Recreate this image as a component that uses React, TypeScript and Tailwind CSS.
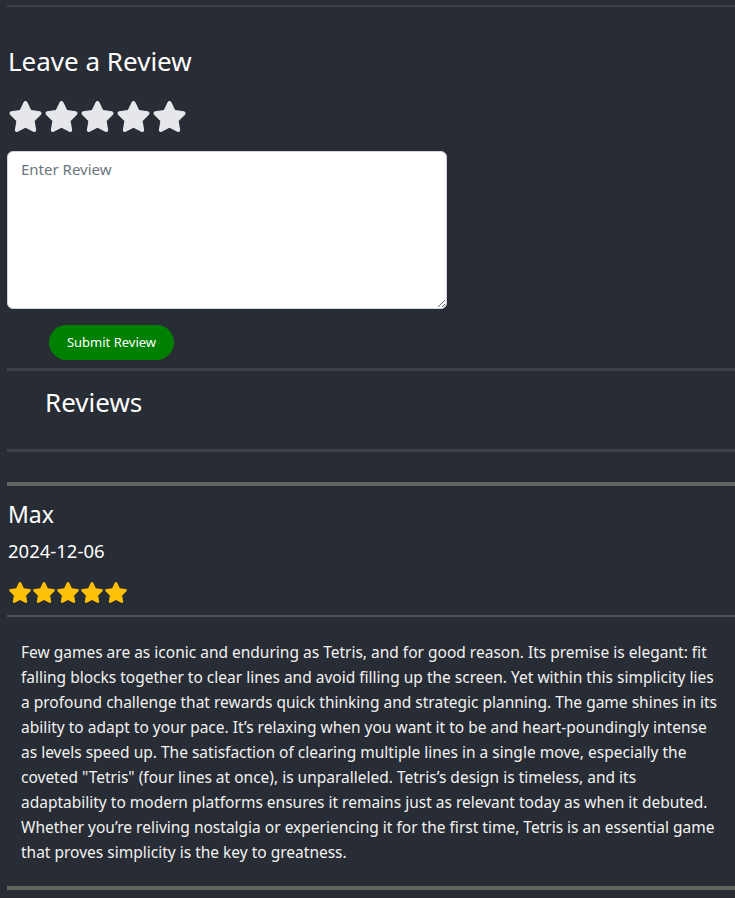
import React from "react";

const StarPath =
  "M316.9 18C311.6 7 300.4 0 288.1 0s-23.4 7-28.8 18L195 150.3 51.4 171.5c-12 1.8-22 10.2-25.7 21.7s-.7 24.2 7.9 32.7L137.8 329 113.2 474.7c-2 12 3 24.2 12.9 31.3s23 8 33.8 2.3l128.3-68.5 128.3 68.5c10.8 5.7 23.9 4.9 33.8-2.3s14.9-19.3 12.9-31.3L438.5 329 542.7 225.9c8.6-8.5 11.700-21.2 7.9-32.7s-13.7-19.9-25.7-21.7L381.2 150.3 316.9 18z";

function Star({ w, h, color }: { w: number; h: number; color: string }) {
  return (
    <svg width={w} height={h} viewBox="0 0 576 512" fill={color} className="block shrink-0">
      <path d={StarPath} />
    </svg>
  );
}

const lines = [
  "Few games are as iconic and enduring as Tetris, and for good reason. Its premise is elegant: fit",
  "falling blocks together to clear lines and avoid filling up the screen. Yet within this simplicity lies",
  "a profound challenge that rewards quick thinking and strategic planning. The game shines in its",
  "ability to adapt to your pace. It\u2019s relaxing when you want it to be and heart-poundingly intense",
  "as levels speed up. The satisfaction of clearing multiple lines in a single move, especially the",
  "coveted \"Tetris\" (four lines at once), is unparalleled. Tetris\u2019s design is timeless, and its",
  "adaptability to modern platforms ensures it remains just as relevant today as when it debuted.",
  "Whether you\u2019re reliving nostalgia or experiencing it for the first time, Tetris is an essential game",
  "that proves simplicity is the key to greatness.",
];

export default function App() {
  return (
    <div
      className="min-h-screen bg-[#282c34] pl-[7px] pt-[5px] text-white"
      style={{ fontFamily: '"Segoe UI", "Noto Sans", sans-serif' }}
    >
      <div className="h-[2px] bg-[#3d414a]" />
      <h2 className="mt-[34px] pl-px text-[26px] leading-[40px] font-normal">Leave a Review</h2>
      <div className="mt-[19px] flex gap-px pl-px">
        {[0, 1, 2, 3, 4].map((i) => (
          <Star key={i} w={35} h={33} color="#e5e7eb" />
        ))}
      </div>
      <textarea
        placeholder="Enter Review"
        className="mt-[18px] block h-[158px] w-[440px] rounded-[6px] border border-[#ced4da] bg-white px-[13px] py-[6px] text-[15px] text-black placeholder:text-[#6c757d]"
      />
      <button className="ml-[42px] mt-[16px] block h-[35px] w-[125px] rounded-full bg-[#008000] text-[13px] text-white">
        Submit Review
      </button>
      <div className="mt-[8px] h-[3px] bg-[#3d414a]" />
      <h2 className="mt-[11px] pl-[38px] text-[26px] leading-[40px] font-normal">Reviews</h2>
      <div className="mt-[27px] h-[3px] bg-[#3d414a]" />
      <div className="mt-[30px] h-[4px] bg-[#62655f]" />
      <div className="mt-[11px] pl-px text-[23px] leading-[34px]">Max</div>
      <div className="mt-[8px] pl-px text-[18.5px] leading-[24px]">2024-12-06</div>
      <div className="mt-[19px] flex pl-px">
        {[0, 1, 2, 3, 4].map((i) => (
          <Star key={i} w={24} h={21} color="#ffc107" />
        ))}
      </div>
      <div className="mt-[12px] h-[2px] bg-[#4a5058]" />
      <p className="mt-[23px] pl-[14px] text-[15.5px] leading-[25px] text-[#f2f2f2]">
        {lines.map((l, i) => (
          <span key={i} className="block whitespace-nowrap">
            {l}
          </span>
        ))}
      </p>
      <div className="mt-[21px] h-[4px] bg-[#62655f]" />
    </div>
  );
}
